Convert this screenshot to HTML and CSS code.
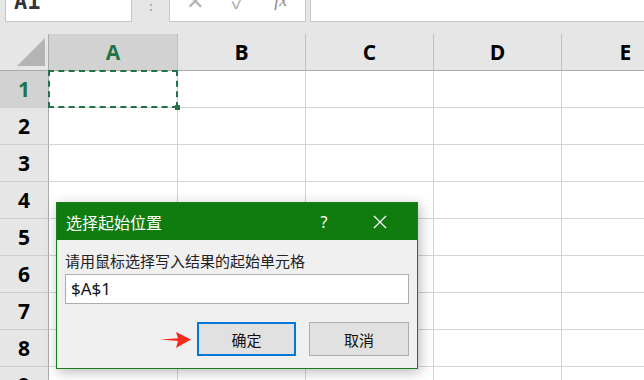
FILE: index.html
```html
<!DOCTYPE html>
<html lang="zh-CN">
<head>
    <meta charset="UTF-8">
    <title>选择起始位置</title>
    <link rel="stylesheet" href="styles.css">
</head>
<body>

    <!-- Formula bar -->
    <div class="formula-bar">
        <div class="name-box">
            <span>A1</span>
            <span class="drop">▾</span>
        </div>
        <div class="grip">⋮</div>
        <div class="func-box">
            <span>✕</span>
            <span>✓</span>
            <span class="fx">fx</span>
        </div>
        <div class="formula-input"></div>
    </div>

    <!-- Sheet -->
    <div class="sheet">
        <div class="corner"><div class="tri"></div></div>
        <div class="col-head active">A</div>
        <div class="col-head">B</div>
        <div class="col-head">C</div>
        <div class="col-head">D</div>
        <div class="col-head">E</div>

        <div class="row-head active">1</div>
        <div class="cell selected"></div><div class="cell"></div><div class="cell"></div><div class="cell"></div><div class="cell"></div>
        <div class="row-head">2</div>
        <div class="cell"></div><div class="cell"></div><div class="cell"></div><div class="cell"></div><div class="cell"></div>
        <div class="row-head">3</div>
        <div class="cell"></div><div class="cell"></div><div class="cell"></div><div class="cell"></div><div class="cell"></div>
        <div class="row-head">4</div>
        <div class="cell"></div><div class="cell"></div><div class="cell"></div><div class="cell"></div><div class="cell"></div>
        <div class="row-head">5</div>
        <div class="cell"></div><div class="cell"></div><div class="cell"></div><div class="cell"></div><div class="cell"></div>
        <div class="row-head">6</div>
        <div class="cell"></div><div class="cell"></div><div class="cell"></div><div class="cell"></div><div class="cell"></div>
        <div class="row-head">7</div>
        <div class="cell"></div><div class="cell"></div><div class="cell"></div><div class="cell"></div><div class="cell"></div>
        <div class="row-head">8</div>
        <div class="cell"></div><div class="cell"></div><div class="cell"></div><div class="cell"></div><div class="cell"></div>
        <div class="row-head">9</div>
        <div class="cell"></div><div class="cell"></div><div class="cell"></div><div class="cell"></div><div class="cell"></div>
    </div>

    <!-- Dialog -->
    <div class="dialog">
        <div class="dialog-title">
            <span class="title-text">选择起始位置</span>
            <span class="help">?</span>
            <span class="close">
                <svg width="14" height="14" viewBox="0 0 14 14">
                    <path d="M1 1 L13 13 M13 1 L1 13" stroke="#fff" stroke-width="1.3" fill="none"/>
                </svg>
            </span>
        </div>
        <div class="dialog-body">
            <div class="label">请用鼠标选择写入结果的起始单元格</div>
            <div class="ref-input">$A$1</div>
            <div class="buttons">
                <svg class="arrow" width="32" height="18" viewBox="0 0 32 18">
                    <path d="M0 8.6 L18 7.2 L16 1 L31 8.5 L16 17 L18 10 Z" fill="#f42a1e"/>
                </svg>
                <button class="btn primary">确定</button>
                <button class="btn">取消</button>
            </div>
        </div>
    </div>

</body>
</html>
```

FILE: styles.css
```css
/* General */
* {
    margin: 0;
    padding: 0;
    box-sizing: border-box;
}

body {
    width: 644px;
    height: 380px;
    overflow: hidden;
    position: relative;
    background: #fff;
    font-family: "Noto Sans", "Noto Sans CJK SC", sans-serif;
}

/* Formula bar */
.formula-bar {
    display: flex;
    align-items: flex-start;
    height: 34px;
    background: #e6e6e6;
}

.name-box {
    margin-left: 5px;
    margin-top: -10px;
    width: 127px;
    height: 32px;
    background: #fff;
    border: 1px solid #c6c6c6;
    display: flex;
    justify-content: space-between;
    padding: 0 6px 0 8px;
    font-family: "DejaVu Sans Mono", monospace;
    font-weight: bold;
    font-size: 22px;
    line-height: 22px;
    color: #333;
}

.name-box .drop {
    font-size: 10px;
    line-height: 14px;
    color: #777;
}

.grip {
    width: 37px;
    text-align: center;
    color: #a8a8a8;
    font-size: 16px;
    line-height: 10px;
    margin-top: -1px;
}

.func-box {
    margin-top: -10px;
    width: 137px;
    height: 32px;
    background: #fff;
    border: 1px solid #c6c6c6;
    display: flex;
    justify-content: space-around;
    padding: 0 4px 0 2px;
    color: #b4b4b4;
    font-size: 22px;
    line-height: 18px;
}

.func-box .fx {
    font-family: "Liberation Serif", serif;
    font-style: italic;
    font-size: 18px;
    color: #8a8a8a;
}

.formula-input {
    margin-left: 4px;
    margin-top: -10px;
    flex: 1;
    height: 32px;
    background: #fff;
    border: 1px solid #c6c6c6;
    border-right: none;
}

/* Sheet grid */
.sheet {
    display: grid;
    grid-template-columns: 49px 129px 128px 128px 128px 128px;
    grid-template-rows: 37px repeat(9, 37px);
    width: 644px;
    overflow: hidden;
}

.corner {
    background: #e6e6e6;
    border-right: 1px solid #ababab;
    border-bottom: 1px solid #ababab;
    position: relative;
}

.corner .tri {
    position: absolute;
    left: 17px;
    top: 4px;
    width: 28px;
    height: 28px;
    background: #b4b4b4;
    clip-path: polygon(100% 0, 100% 100%, 0 100%);
}

.col-head {
    background: #e6e6e6;
    border-right: 1px solid #c0c0c0;
    border-bottom: 1px solid #ababab;
    display: flex;
    align-items: center;
    justify-content: center;
    font-family: "Open Sans", sans-serif;
    font-weight: 700;
    font-size: 21px;
    color: #000;
}

.row-head {
    background: #e6e6e6;
    border-right: 1px solid #ababab;
    border-bottom: 1px solid #cfcfcf;
    display: flex;
    align-items: center;
    justify-content: center;
    font-family: "Open Sans", sans-serif;
    font-weight: 700;
    font-size: 21px;
    color: #000;
}

.col-head.active,
.row-head.active {
    background: #d2d2d2;
    color: #217346;
}

.cell {
    border-right: 1px solid #d4d4d4;
    border-bottom: 1px solid #d4d4d4;
    position: relative;
}

/* copy marquee around A1 */
.cell.selected::after {
    content: "";
    position: absolute;
    left: -1px;
    top: -1px;
    right: -1px;
    bottom: -1px;
    border: 2px dashed #217346;
}

.cell.selected::before {
    content: "";
    position: absolute;
    right: -3px;
    bottom: -3px;
    width: 5px;
    height: 5px;
    background: #217346;
    z-index: 1;
}

/* Dialog */
.dialog {
    position: absolute;
    left: 56px;
    top: 202px;
    width: 362px;
    height: 167px;
    border: 1px solid #1a7f1a;
    background: #f0f0f0;
    box-shadow: 2px 3px 12px rgba(0, 0, 0, 0.28);
    font-family: "Noto Sans CJK SC", sans-serif;
}

.dialog-title {
    height: 37px;
    background: #107c10;
    display: flex;
    align-items: center;
    padding-left: 9px;
    color: #fff;
}

.title-text {
    font-size: 16px;
    flex: 1;
}

.help {
    font-family: "Noto Sans", sans-serif;
    font-size: 16px;
    width: 60px;
    text-align: center;
    margin-right: 3px;
}

.close {
    width: 60px;
    display: flex;
    justify-content: center;
    padding-right: 14px;
}

.dialog-body {
    padding: 10px 8px 0;
}

.label {
    font-size: 15px;
    line-height: 22px;
    color: #222;
}

.ref-input {
    margin-top: 2px;
    height: 30px;
    background: #fff;
    border: 1px solid #adadad;
    padding-left: 5px;
    font-family: "Noto Sans", sans-serif;
    font-size: 17px;
    line-height: 27px;
    color: #111;
}

.buttons {
    margin-top: 18px;
    display: flex;
    justify-content: flex-end;
    align-items: center;
    gap: 13px;
}

.arrow {
    margin-right: -8px;
    margin-top: 1px;
}

.btn {
    width: 100px;
    height: 34px;
    background: #e1e1e1;
    border: 1px solid #adadad;
    font-family: "Noto Sans CJK SC", sans-serif;
    font-size: 15px;
    color: #111;
}

.btn.primary {
    width: 99px;
    border: 2px solid #0078d7;
}
```
